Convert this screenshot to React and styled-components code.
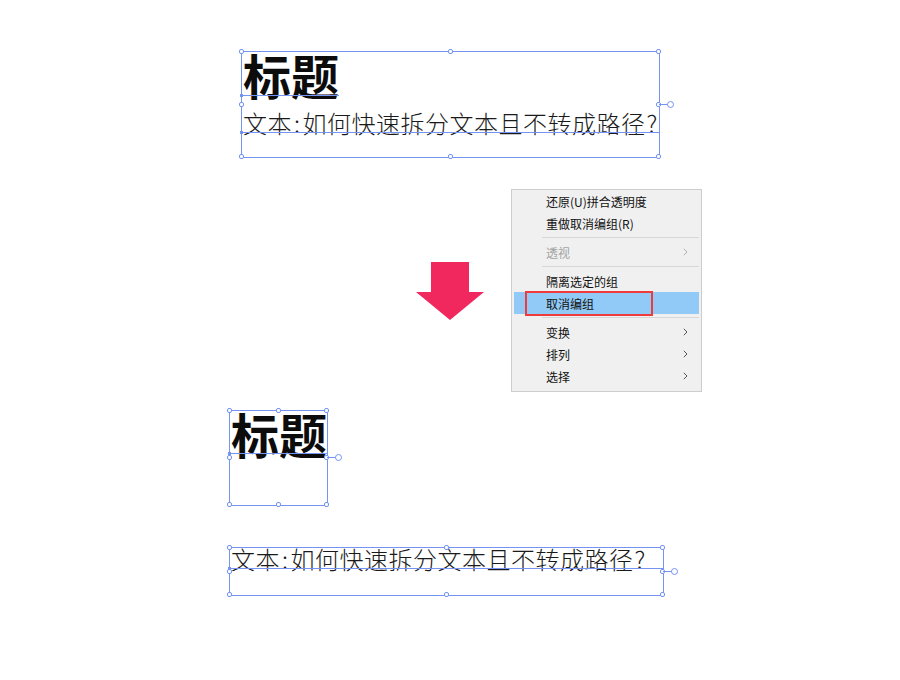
import React from "react";
import styled, { createGlobalStyle } from "styled-components";

const GlobalStyle = createGlobalStyle`
  html, body {
    margin: 0;
    padding: 0;
    background: #ffffff;
  }
  body {
    font-family: "Noto Sans CJK SC", "Noto Sans", sans-serif;
    color: #111;
  }
`;

const BLUE = "#7493f2";

const Page = styled.div`
  width: 900px;
  height: 680px;
  display: flex;
  flex-direction: column;
  padding-top: 51px;
  box-sizing: border-box;
  overflow: hidden;
`;

const Frame = styled.div`
  position: relative;
  box-sizing: border-box;
  margin-left: ${(p) => p.$left}px;
  margin-top: ${(p) => p.$top || 0}px;
  width: ${(p) => p.$w}px;
  height: ${(p) => p.$h}px;
  border: 1px solid ${BLUE};
  display: flex;
  flex-direction: column;
`;

const Title = styled.div`
  font-size: 48px;
  font-weight: 700;
  line-height: 44px;
  padding-left: 1px;
  white-space: nowrap;
  color: #0c0c0c;
`;

const Body = styled.div`
  font-size: 24px;
  font-weight: 300;
  line-height: ${(p) => p.$lh}px;
  letter-spacing: 0.5px;
  padding-left: 1px;
  white-space: nowrap;
  color: #1a1a1a;
`;

const Punct = styled.span`
  padding: 0 ${(p) => p.$pad}px;
`;

const Baseline = styled.span`
  position: absolute;
  left: -1px;
  top: ${(p) => p.$y - 1}px;
  width: ${(p) => p.$w}px;
  height: 1px;
  background: ${BLUE};
  &::before {
    content: "";
    position: absolute;
    left: -1px;
    top: -1px;
    width: 3px;
    height: 3px;
    background: ${BLUE};
  }
`;

const Handle = styled.span`
  position: absolute;
  left: ${(p) => p.$x}%;
  top: ${(p) => p.$y}%;
  width: 5px;
  height: 5px;
  margin: -3px 0 0 -3px;
  box-sizing: border-box;
  border: 1px solid ${BLUE};
  border-radius: 2px;
  background: #fff;
`;

const Rotate = styled.span`
  position: absolute;
  left: 100%;
  top: 50%;
  width: 9px;
  height: 1px;
  margin-top: -1px;
  background: ${BLUE};
  &::after {
    content: "";
    position: absolute;
    left: 8px;
    top: -3px;
    width: 7px;
    height: 7px;
    box-sizing: border-box;
    border: 1px solid ${BLUE};
    border-radius: 50%;
    background: #fff;
  }
`;

const Middle = styled.div`
  display: flex;
  align-items: center;
  margin-top: 31px;
  padding-left: 416px;
  gap: 27px;
`;

const ArrowIcon = styled.svg`
  display: block;
  flex: none;
`;

const Menu = styled.div`
  width: 191px;
  box-sizing: border-box;
  border: 1px solid #cdcdcd;
  background: #f0f0f0;
  padding: 0 2px 4px;
  font-size: 12px;
  color: #111;
`;

const Item = styled.div`
  position: relative;
  height: 22px;
  display: flex;
  align-items: center;
  justify-content: space-between;
  padding: 0 11px 0 32px;
  background: ${(p) => (p.$active ? "#91c9f7" : "transparent")};
  color: ${(p) => (p.$disabled ? "#a3a3a3" : "#111")};
`;

const Separator = styled.div`
  height: 1px;
  margin: 3px 0 3px 28px;
  background: #d7d7d7;
`;

const Highlight = styled.span`
  position: absolute;
  left: 11px;
  top: -1px;
  width: 128px;
  height: 25px;
  box-sizing: border-box;
  border: 2.5px solid #ef3b3b;
`;

const Chevron = ({ color }) => (
  <svg width="5" height="8" viewBox="0 0 5 8">
    <path d="M0.8 0.8 L4 4 L0.8 7.2" fill="none" stroke={color} strokeWidth="1" />
  </svg>
);

const handles = [
  [0, 0], [50, 0], [100, 0],
  [0, 50], [100, 50],
  [0, 100], [50, 100], [100, 100],
];

const Handles = () => (
  <>
    {handles.map(([x, y]) => (
      <Handle key={`${x}-${y}`} $x={x} $y={y} />
    ))}
    <Rotate />
  </>
);

const menuItems = [
  { label: "还原(U)拼合透明度" },
  { label: "重做取消编组(R)" },
  { sep: true },
  { label: "透视", sub: true, disabled: true },
  { sep: true },
  { label: "隔离选定的组" },
  { label: "取消编组", active: true },
  { sep: true },
  { label: "变换", sub: true },
  { label: "排列", sub: true },
  { label: "选择", sub: true },
];

const SampleText = () => (
  <>
    文本<Punct $pad={2}>:</Punct>如何快速拆分文本且不转成路径<Punct $pad={1}>?</Punct>
  </>
);

export default function App() {
  return (
    <>
      <GlobalStyle />
      <Page>
        <Frame $left={241} $w={419} $h={107}>
          <Title>标题</Title>
          <Body $lh={53}>
            <SampleText />
          </Body>
          <Baseline $y={44} $w={98} />
          <Baseline $y={81} $w={419} />
          <Handles />
        </Frame>

        <Middle>
          <ArrowIcon width="68" height="58" viewBox="0 0 68 58">
            <path d="M15 0 H53 V30 H68 L34 58 L0 30 H15 Z" fill="#f0285d" />
          </ArrowIcon>
          <Menu>
            {menuItems.map((it, i) =>
              it.sep ? (
                <Separator key={i} />
              ) : (
                <Item key={i} $active={it.active} $disabled={it.disabled}>
                  <span>{it.label}</span>
                  {it.sub && <Chevron color={it.disabled ? "#b0b0b0" : "#555"} />}
                  {it.active && <Highlight />}
                </Item>
              )
            )}
          </Menu>
        </Middle>

        <Frame $left={229} $top={18} $w={99} $h={96}>
          <Title>标题</Title>
          <Baseline $y={43} $w={99} />
          <Handles />
        </Frame>

        <Frame $left={229} $top={41} $w={435} $h={49}>
          <Body $lh={21}>
            <SampleText />
          </Body>
          <Baseline $y={21} $w={435} />
          <Handles />
        </Frame>
      </Page>
    </>
  );
}
